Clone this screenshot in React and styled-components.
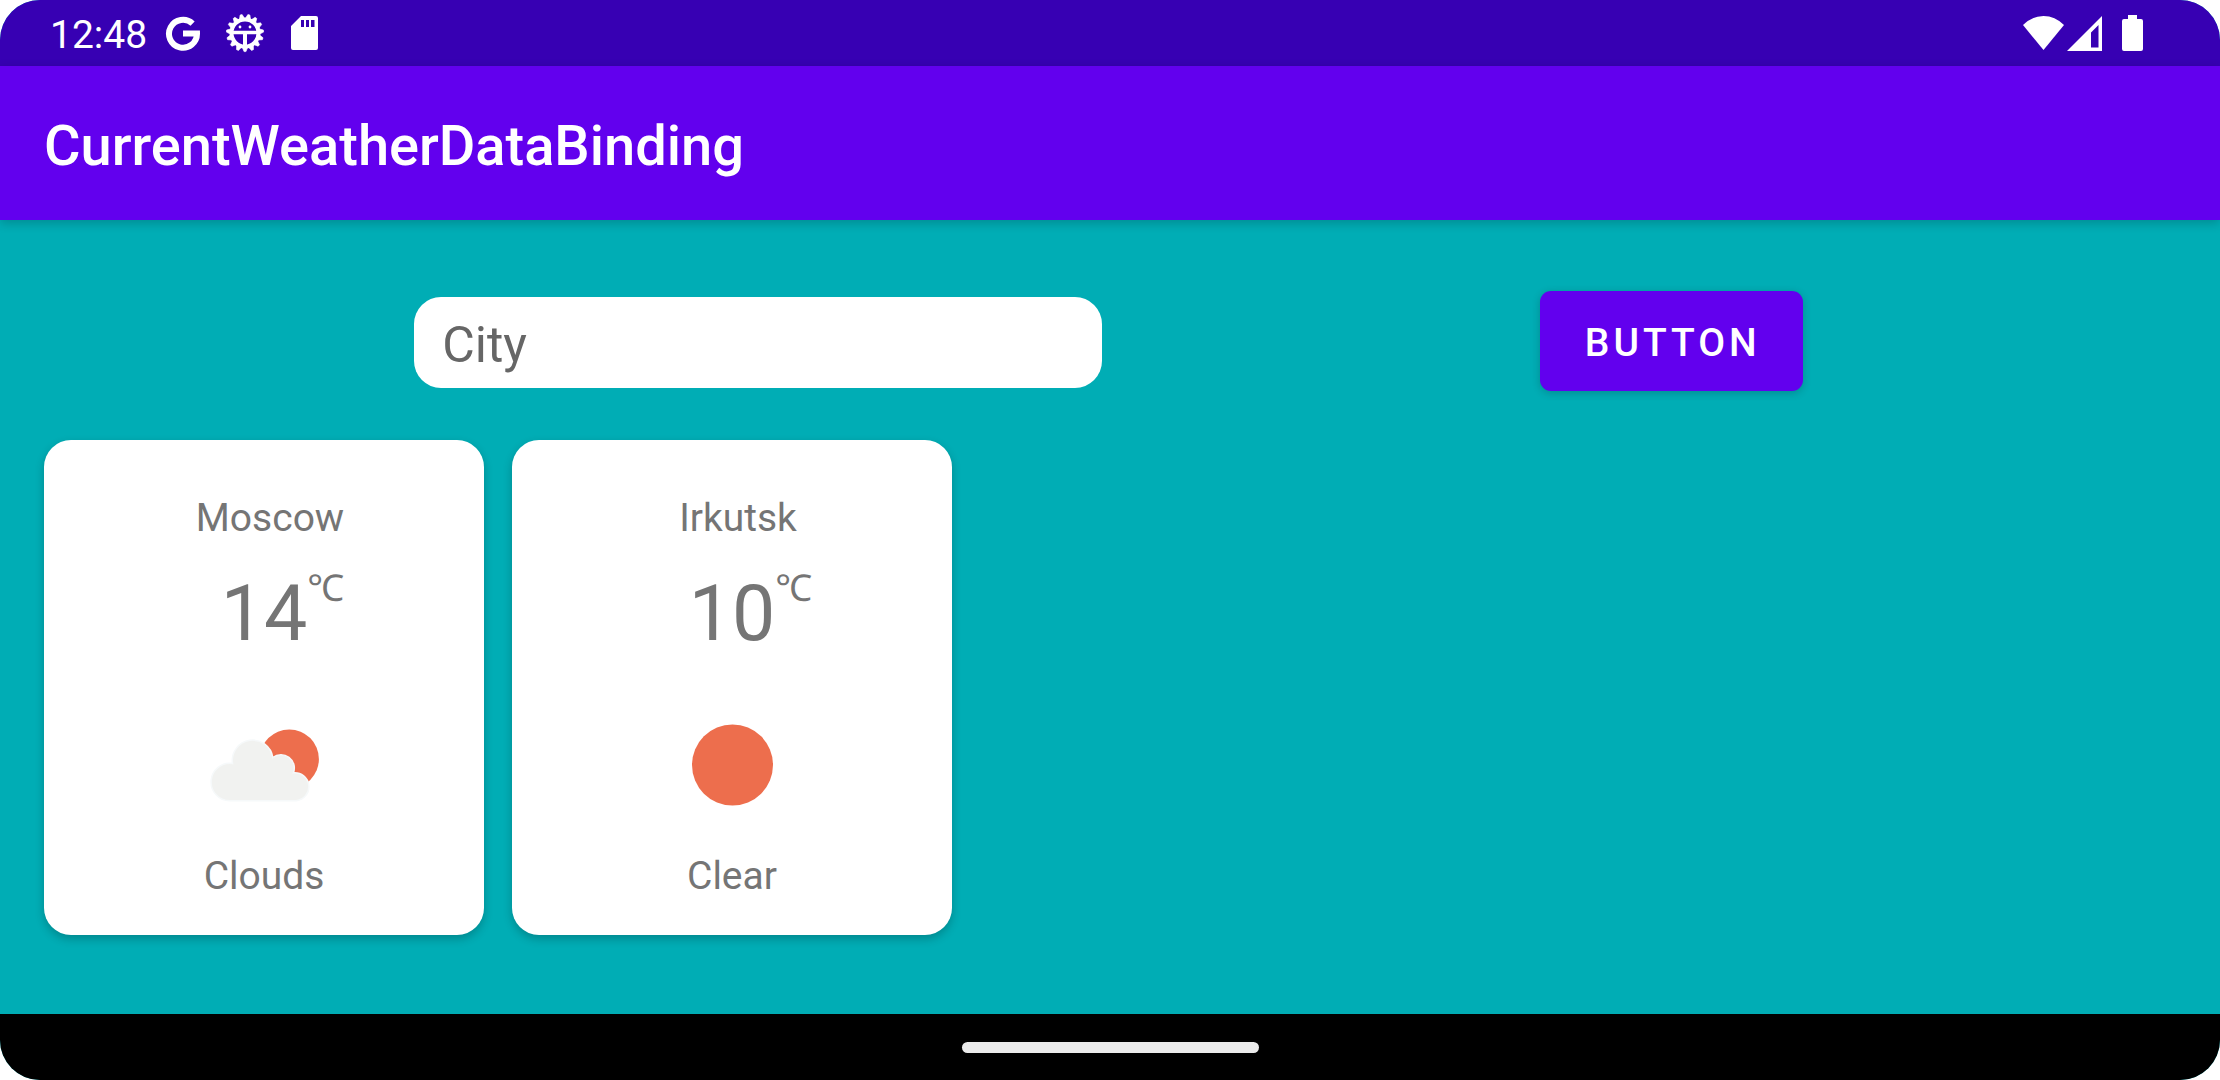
import React from "react";
import styled, { createGlobalStyle } from "styled-components";

const GlobalStyle = createGlobalStyle`
  *, *::before, *::after { box-sizing: border-box; }
  body {
    margin: 0;
    background: #ffffff;
    font-family: Roboto, "Noto Sans", sans-serif;
  }
`;

const Screen = styled.div`
  display: flex;
  flex-direction: column;
  min-height: 100vh;
  border-radius: 40px;
  overflow: hidden;
  background: #00adb5;
`;

const StatusBar = styled.div`
  display: flex;
  align-items: center;
  justify-content: space-between;
  height: 66px;
  padding: 0 77px 0 50px;
  background: #3700b3;
  color: #ffffff;
`;

const StatusGroup = styled.div`
  display: flex;
  align-items: center;
  gap: ${(p) => p.$gap}px;
`;

const Clock = styled.time`
  padding-top: 4px;
  font-size: 39px;
  line-height: 46px;
`;

const AppBar = styled.header`
  display: flex;
  align-items: center;
  height: 154px;
  padding: 0 44px;
  background: #6200ee;
  color: #ffffff;
  box-shadow: 0 3px 10px rgba(0, 0, 0, 0.2);
`;

const Title = styled.h1`
  margin: 0;
  padding-top: 6px;
  font-size: 56px;
  font-weight: 500;
  line-height: 64px;
`;

const Content = styled.main`
  flex: 1;
  padding: 71px 0 79px;
`;

const SearchForm = styled.form`
  display: flex;
  align-items: center;
  justify-content: space-evenly;
  padding-right: 3px;
`;

const CityInput = styled.input`
  width: 31%;
  height: 91px;
  margin: 3px 24px 0 0;
  padding: 4px 28px 0;
  border: 0;
  border-radius: 27px;
  outline: 0;
  background: #ffffff;
  color: #212121;
  font-family: inherit;
  font-size: 50px;
  &::placeholder {
    color: #666666;
    opacity: 1;
  }
`;

const SubmitButton = styled.button`
  height: 100px;
  padding: 4px 42px 0 45px;
  border: 0;
  border-radius: 11px;
  background: #6200ee;
  color: #ffffff;
  font-family: inherit;
  font-size: 39px;
  font-weight: 500;
  line-height: 46px;
  letter-spacing: 4px;
  text-transform: uppercase;
  box-shadow: 0 2px 8px rgba(0, 0, 0, 0.2);
`;

const CardList = styled.ul`
  display: flex;
  flex-wrap: wrap;
  gap: 28px;
  margin: 49px 44px 0;
  padding: 0;
  list-style: none;
`;

const Card = styled.li`
  display: flex;
  flex-direction: column;
  align-items: center;
  width: 440px;
  padding: 55px 0 36px;
  border-radius: 27px;
  background: #ffffff;
  color: #757575;
  box-shadow: 0 4px 10px rgba(0, 0, 0, 0.22);
`;

const CityName = styled.h2`
  margin: 0;
  padding-left: 12px;
  font-size: 39px;
  font-weight: 400;
  line-height: 46px;
`;

const Temperature = styled.div`
  display: grid;
  grid-template-columns: 1fr auto 1fr;
  align-items: start;
  align-self: stretch;
  margin-top: 23px;
`;

const Degrees = styled.span`
  grid-column: 2;
  font-size: 77px;
  line-height: 100px;
`;

const Unit = styled.span`
  font-family: "Noto Sans", sans-serif;
  font-size: 37px;
  line-height: 46px;
`;

const WeatherIcon = styled.svg`
  width: 138px;
  height: 138px;
  margin-top: 32px;
`;

const Condition = styled.p`
  margin: 19px 0 0;
  font-size: 39px;
  line-height: 46px;
`;

const NavBar = styled.footer`
  display: flex;
  align-items: center;
  justify-content: center;
  height: 66px;
  background: #000000;
`;

const HomeHandle = styled.div`
  width: 297px;
  height: 11px;
  border-radius: 6px;
  background: #ebebeb;
`;

const GoogleIcon = () => (
  <svg width="36" height="36" viewBox="0 0 36 36" fill="none" aria-hidden="true">
    <path d="M27.6 8.6 A14 14 0 1 0 32 18.5 H18" stroke="#fff" strokeWidth="6" />
  </svg>
);

const TEETH = Array.from({ length: 15 }, (_, i) => 180 + i * 24);

const BugGearIcon = () => (
  <svg width="40" height="40" viewBox="1 0 40 40" fill="none" stroke="#fff" aria-hidden="true">
    <circle cx="20" cy="20" r="13.5" strokeWidth="4" />
    {TEETH.map((a) => (
      <path key={a} d="M17.200 6 L19 1.400 H21 L22.800 6 Z" fill="#fff" strokeWidth="0.600" strokeLinejoin="round" transform={`rotate(${a} 20 20)`} />
    ))}
    <path d="M8 19.5 H32" strokeWidth="3.4" />
    <path d="M20 20 V34" strokeWidth="4" />
    <circle cx="15" cy="14" r="1.4" fill="#fff" stroke="none" />
    <circle cx="25" cy="14" r="1.4" fill="#fff" stroke="none" />
  </svg>
);

const SdCardIcon = () => (
  <svg width="27" height="34" viewBox="0 0 27 34" aria-hidden="true">
    <path
      fill="#fff"
      fillRule="evenodd"
      d="M10 0 H25 Q27 0 27 2 V32 Q27 34 25 34 H2 Q0 34 0 32 V10 Z M10 4 V11 H13 V4 Z M15 4 V11 H18 V4 Z M20 4 V11 H23.500 V4 Z"
    />
  </svg>
);

const WifiIcon = () => (
  <svg width="41" height="34" viewBox="0 0 41 34" aria-hidden="true">
    <path fill="#fff" d="M0 9 Q9 0 20.500 0 Q32 0 41 9 L20.500 34 Z" />
  </svg>
);

const SignalIcon = () => (
  <svg width="35" height="35" viewBox="0 0 35 35" aria-hidden="true">
    <path fill="#fff" fillRule="evenodd" d="M35 0 V35 H0 Z M31.500 9 L24 16.500 V31.500 H31.500 Z" />
  </svg>
);

const BatteryIcon = () => (
  <svg width="21" height="36" viewBox="0 0 21 36" aria-hidden="true">
    <path fill="#fff" d="M6 0 H15 V4 H19 Q21 4 21 6 V34 Q21 36 19 36 H2 Q0 36 0 34 V6 Q0 4 2 4 H6 Z" />
  </svg>
);

const CLOUD =
  "M34.700 104.700 A18.700 18.700 0 1 1 37.500 67.500 A20.300 20.300 0 1 1 77.800 61.500 A13.300 13.300 0 0 1 98.400 76.800 A14 14 0 0 1 101.300 104.700 Z";

const CloudsIcon = () => (
  <WeatherIcon viewBox="0 0 138 138" role="img" aria-label="Clouds">
    <circle cx="94.300" cy="63" r="29.600" fill="#ed6e4d" />
    <path d={CLOUD} fill="#f1f2f0" stroke="#f6f9fa" strokeWidth="1.500" />
  </WeatherIcon>
);

const ClearIcon = () => (
  <WeatherIcon viewBox="0 0 138 138" role="img" aria-label="Clear">
    <circle cx="69.500" cy="69" r="40.500" fill="#ed6e4d" />
  </WeatherIcon>
);

const CITIES = [
  { name: "Moscow", degrees: 14, condition: "Clouds", Icon: CloudsIcon },
  { name: "Irkutsk", degrees: 10, condition: "Clear", Icon: ClearIcon },
];

export default function App() {
  return (
    <>
      <GlobalStyle />
      <Screen>
        <StatusBar>
          <StatusGroup $gap={18}>
            <Clock>12:48</Clock>
            <StatusGroup $gap={25}>
              <GoogleIcon />
              <BugGearIcon />
              <SdCardIcon />
            </StatusGroup>
          </StatusGroup>
          <StatusGroup $gap={20}>
            <StatusGroup $gap={3}>
              <WifiIcon />
              <SignalIcon />
            </StatusGroup>
            <BatteryIcon />
          </StatusGroup>
        </StatusBar>
        <AppBar>
          <Title>CurrentWeatherDataBinding</Title>
        </AppBar>
        <Content>
          <SearchForm onSubmit={(e) => e.preventDefault()}>
            <CityInput type="text" placeholder="City" aria-label="City" />
            <SubmitButton type="submit">Button</SubmitButton>
          </SearchForm>
          <CardList>
            {CITIES.map(({ name, degrees, condition, Icon }) => (
              <Card key={name}>
                <CityName>{name}</CityName>
                <Temperature>
                  <Degrees>{degrees}</Degrees>
                  <Unit>℃</Unit>
                </Temperature>
                <Icon />
                <Condition>{condition}</Condition>
              </Card>
            ))}
          </CardList>
        </Content>
        <NavBar>
          <HomeHandle />
        </NavBar>
      </Screen>
    </>
  );
}
